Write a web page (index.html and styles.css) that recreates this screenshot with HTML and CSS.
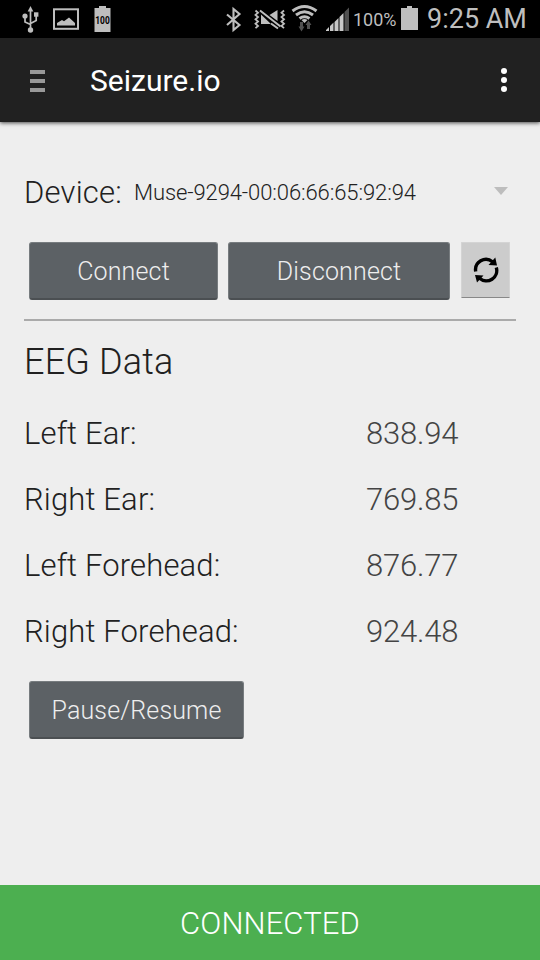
FILE: index.html
```html
<!DOCTYPE html>
<html lang="en">
<head>
    <meta charset="UTF-8">
    <title>Seizure.io</title>
    <link rel="stylesheet" href="styles.css">
</head>
<body>
    <div class="status-bar">
        <svg class="status-icons" width="120" height="38" viewBox="0 0 120 38">
            <!-- usb -->
            <g fill="none" stroke="#bebebe" stroke-width="1.7">
                <path d="M30.5 10V29M30.500 24.500L25 22V16M30.500 23.500L36.200 20.500V15"/>
            </g>
            <g fill="#bebebe">
                <path d="M30.5 6L33.3 11.5H27.7Z"/>
                <circle cx="25" cy="16" r="2.6"/>
                <rect x="34" y="12.3" width="4.4" height="4.4"/>
                <circle cx="30.5" cy="30" r="2.7"/>
            </g>
            <!-- picture -->
            <rect x="54" y="9.3" width="24" height="19.5" fill="none" stroke="#bebebe" stroke-width="2"/>
            <path d="M57 25.5V23L62 20L64 21.3L69 17.5L75 23V25.5Z" fill="#bebebe"/>
            <!-- battery notification -->
            <path d="M94.500 8H99V6H106V8H110.500V32H94.500Z" fill="#bebebe"/>
            <text class="battery-text" x="95.300" y="24" textLength="14.400" lengthAdjust="spacingAndGlyphs">100</text>
        </svg>
        <svg class="system-icons" width="130" height="38" viewBox="220 0 130 38">
            <!-- bluetooth -->
            <path d="M227 14.500L239.500 25L233.500 30V9L239.500 14L227 25" fill="none" stroke="#bebebe" stroke-width="2.1"/>
            <!-- vibrate / muted -->
            <g fill="none" stroke="#bebebe" stroke-width="1.800">
                <path d="M255.500 10.500l2.500 2.200-2.500 2.200 2.500 2.200-2.500 2.200 2.500 2.200-2.500 2.200 2.500 2.200-2.500 2.200"/>
                <path d="M284 10.500l-2.500 2.200 2.500 2.200-2.500 2.200 2.500 2.200-2.500 2.200 2.500 2.200-2.500 2.200 2.500 2.200"/>
            </g>
            <path d="M261 14.500L271 24H261ZM269.500 15L277.500 10V21Z" fill="#bebebe"/>
            <path d="M260 10.500L280.500 26.500M271 23.500L278 28.500" stroke="#bebebe" stroke-width="2"/>
            <!-- wifi -->
            <g fill="none" stroke="#bebebe" stroke-width="3">
                <path d="M292.500 11Q304.500 2 316.500 11"/>
                <path d="M296 15Q304.500 8.500 313 15"/>
                <path d="M299.500 18.500Q304.500 15 309.500 18.500"/>
            </g>
            <path d="M301.500 20Q304.500 18.200 307.500 20L304.500 23Z" fill="#bebebe"/>
            <path d="M300 22H303V26.500H304.500L301.500 31.500L298.500 26.500H300ZM307 29H310V25H311.500L308.500 20.500L305.500 25H307Z" fill="#505050"/>
            <!-- signal -->
            <path d="M326 31V30L329 27V31ZM330 31V26L333.500 22.500V31ZM334.500 31V22L338.500 18V31ZM339.500 31V17L343.500 13V31Z" fill="#c8c8c8"/>
            <path d="M344.500 31V12L349 7.500V31Z" fill="#505050"/>
        </svg>
        <span class="battery-level">100%</span>
        <svg class="battery-icon" width="17" height="38" viewBox="0 0 17 38">
            <path d="M0 8H6V6H11V8H17V30H0Z" fill="#bebebe"/>
        </svg>
        <span class="clock">9:25 AM</span>
    </div>

    <div class="action-bar">
        <div class="drawer">
            <span></span>
            <span></span>
            <span></span>
        </div>
        <h1 class="title">Seizure.io</h1>
        <div class="overflow">
            <span></span>
            <span></span>
            <span></span>
        </div>
    </div>

    <div class="content">
        <div class="device">
            <span class="device-label">Device:</span>
            <span class="device-name">Muse-9294-00:06:66:65:92:94</span>
            <span class="arrow"></span>
        </div>

        <div class="buttons">
            <button class="btn connect">Connect</button>
            <button class="btn disconnect">Disconnect</button>
            <button class="refresh">
                <svg width="26" height="26" viewBox="0 0 26 26">
                    <path d="M2.700 14.500A10.400 10.400 0 0 1 19.500 4.700M23.300 10.500A10.400 10.400 0 0 1 6.500 21.300" fill="none" stroke="#000" stroke-width="3.400"/>
                    <path d="M22.300 0.500L24 8.500L15.500 8ZM2 18L10.500 18.500L4 25.500Z"/>
                </svg>
            </button>
        </div>

        <h2 class="heading">EEG Data</h2>
        <div class="row"><span>Left Ear:</span><span class="value">838.94</span></div>
        <div class="row"><span>Right Ear:</span><span class="value">769.85</span></div>
        <div class="row"><span>Left Forehead:</span><span class="value">876.77</span></div>
        <div class="row"><span>Right Forehead:</span><span class="value">924.48</span></div>

        <button class="btn pause">Pause/Resume</button>
    </div>

    <div class="footer">CONNECTED</div>
</body>
</html>
```
FILE: styles.css
```css
* {
    box-sizing: border-box;
}
body {
    display: flex;
    flex-direction: column;
    height: 960px;
    margin: 0;
    background-color: #eeeeee;
    color: #212121;
    font-family: Roboto, sans-serif;
    font-weight: 300;
    overflow: hidden;
}
.status-bar {
    display: flex;
    height: 38px;
    background-color: #000;
    color: #bebebe;
    font-weight: 400;
    line-height: 38px;
    white-space: nowrap;
}
.system-icons {
    margin-left: 100px;
}
.battery-text {
    font-size: 10px;
    font-weight: 700;
}
.battery-level {
    width: 48px;
    margin-left: 3px;
    font-size: 18px;
    line-height: 40px;
}
.battery-icon {
    margin-right: 9px;
}
.clock {
    font-size: 27px;
}
.action-bar {
    display: flex;
    align-items: center;
    height: 84px;
    padding: 0 33px 0 30px;
    background-color: #212121;
    box-shadow: 0 1px 4px rgba(0, 0, 0, 0.7);
}
.drawer {
    display: flex;
    flex-direction: column;
    gap: 5px;
    width: 15px;
    margin-right: 45px;
    padding-top: 2px;
}
.drawer span {
    height: 4px;
    background-color: #999;
}
.title {
    margin: 0;
    color: #fff;
    font-size: 30px;
    font-weight: 400;
}
.overflow {
    display: flex;
    flex-direction: column;
    gap: 3px;
    margin-left: auto;
}
.overflow span {
    width: 6px;
    height: 6px;
    border-radius: 50%;
    background-color: #fff;
}
.content {
    flex: 1;
    padding: 46px 24px 0;
}
.device {
    display: flex;
    align-items: center;
    height: 48px;
}
.device-label {
    width: 110px;
    font-size: 31px;
    letter-spacing: 0.2px;
}
.device-name {
    font-size: 22px;
    letter-spacing: -0.1px;
}
.arrow {
    margin: 0 8px 3px auto;
    border-top: 8px solid #bdbdbd;
    border-left: 7px solid transparent;
    border-right: 7px solid transparent;
}
.buttons {
    display: flex;
    gap: 10px;
    height: 105px;
    padding: 26px 5px 0;
    border-bottom: 2px solid #aaa;
}
.btn {
    height: 58px;
    padding: 1px 0 0;
    border: 1px solid #777c7f;
    border-bottom: 2px solid #4b4f52;
    border-radius: 3px;
    background-color: #5c6165;
    color: #eee;
    font-family: inherit;
    font-size: 25px;
    font-weight: 300;
    letter-spacing: 0.15px;
}
.connect {
    width: 189px;
}
.disconnect {
    width: 222px;
}
.refresh {
    display: flex;
    align-items: center;
    justify-content: center;
    width: 49px;
    height: 56px;
    margin-left: 1px;
    padding: 0;
    border: 1px solid #d4d4d4;
    border-bottom: 1px solid #888;
    border-radius: 1px;
    background-color: #ccc;
}
.heading {
    margin: 0;
    height: 79px;
    font-size: 36px;
    font-weight: 300;
    letter-spacing: 0.15px;
    line-height: 82px;
}
.row {
    display: flex;
    height: 66px;
    font-size: 31px;
    letter-spacing: 0.15px;
    line-height: 68px;
}
.row span {
    width: 342px;
}
.row .value {
    width: auto;
    color: #444;
    letter-spacing: -0.2px;
}
.pause {
    width: 215px;
    margin: 17px 0 0 5px;
}
.footer {
    height: 75px;
    background-color: #4caf50;
    color: #fff;
    font-size: 31px;
    letter-spacing: 0.1px;
    line-height: 77px;
    text-align: center;
}
```
